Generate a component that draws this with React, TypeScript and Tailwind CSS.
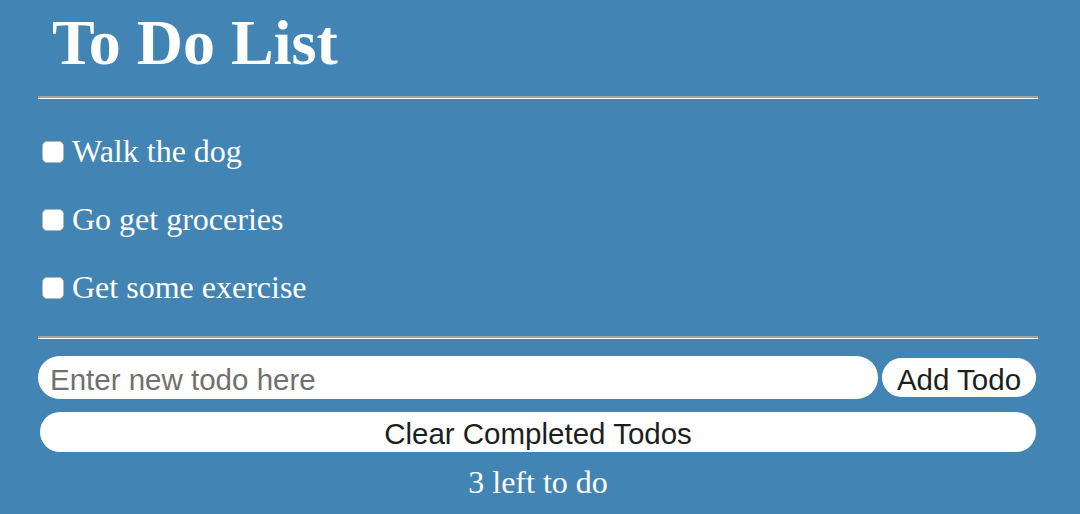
import { useState } from 'react';

interface Todo {
  id: number;
  text: string;
  done: boolean;
}

const initialTodos: Todo[] = [
  { id: 1, text: 'Walk the dog', done: false },
  { id: 2, text: 'Go get groceries', done: false },
  { id: 3, text: 'Get some exercise', done: false }
];

function Divider() {
  return <div className="h-[3px] border-t-2 border-t-[#a3a3a3] border-b border-b-white" />;
}

export default function App() {
  const [todos, setTodos] = useState<Todo[]>(initialTodos);
  const [draft, setDraft] = useState('');

  const toggle = (id: number) =>
    setTodos(todos.map(t => (t.id === id ? { ...t, done: !t.done } : t)));

  const addTodo = () => {
    if (!draft.trim()) return;
    setTodos([...todos, { id: Date.now(), text: draft.trim(), done: false }]);
    setDraft('');
  };

  const left = todos.filter(t => !t.done).length;

  return (
    <div className="min-h-[514px] w-full bg-[#4285b4] text-white font-['Liberation_Serif',serif]">
      <div className="mx-[38px] w-[1000px]">
        <div className="h-[96px] pl-[14px] pt-[11px]">
          <h1 className="text-[64px] leading-[64px] font-bold">To Do List</h1>
        </div>
        <Divider />

        <ul className="pt-[18px] pb-[15px]">
          {todos.map(todo => (
            <li key={todo.id} className="flex items-center h-[68px]">
              <input
                type="checkbox"
                checked={todo.done}
                onChange={() => toggle(todo.id)}
                className="appearance-none ml-[4px] mt-[2px] w-[22px] h-[22px] rounded-[5px] bg-white border border-[#b5b5b5] checked:bg-[#1f6fd6]"
              />
              <span className={`ml-[8px] text-[32px] leading-[68px] ${todo.done ? 'line-through' : ''}`}>
                {todo.text}
              </span>
            </li>
          ))}
        </ul>

        <Divider />

        <div className="font-['Liberation_Sans',sans-serif] text-[29.5px] text-[#1e1e1e]">
          <div className="flex items-center gap-[4px] mt-[17px] pr-[2px]">
            <input
              value={draft}
              onChange={e => setDraft(e.target.value)}
              placeholder="Enter new todo here"
              className="flex-1 h-[43px] rounded-full bg-white pl-[12px] pt-[5px] outline-none placeholder:text-[#707070]"
            />
            <button onClick={addTodo} className="w-[154px] h-[39px] rounded-full bg-white">
              Add Todo
            </button>
          </div>
          <button
            onClick={() => setTodos(todos.filter(t => !t.done))}
            className="mt-[13px] ml-[2px] w-[996px] h-[40px] rounded-full bg-white"
          >
            Clear Completed Todos
          </button>
        </div>

        <div className="mt-[6px] text-center text-[32px] leading-[40px]">{left} left to do</div>
      </div>
    </div>
  );
}
